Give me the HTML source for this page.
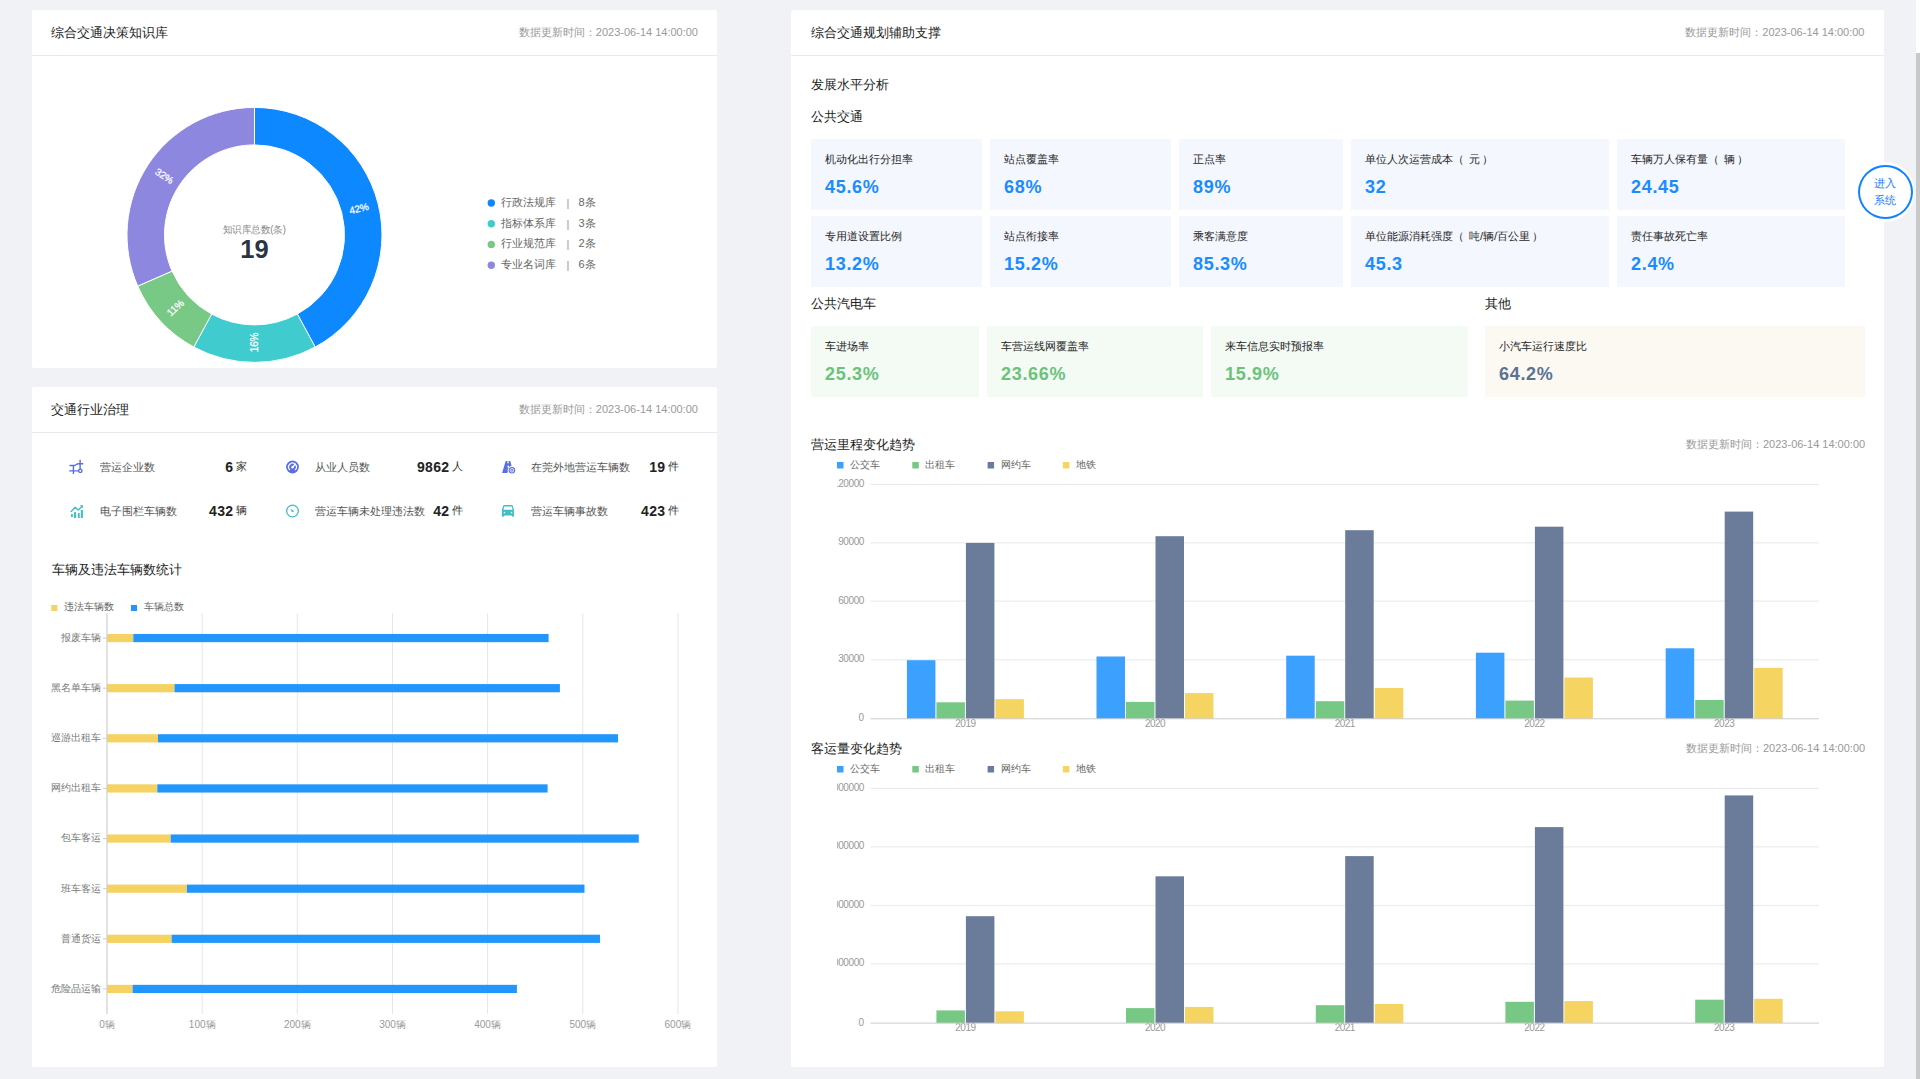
<!DOCTYPE html><html><head><meta charset="utf-8"><style>
*{margin:0;padding:0;box-sizing:border-box}
html,body{width:1920px;height:1079px;overflow:hidden;background:#f0f2f5;font-family:"Liberation Sans",sans-serif;color:#333}
.abs{position:absolute}
.panel{position:absolute;background:#fff;border-radius:2px}
.hd{position:absolute;left:0;right:0;top:0;height:46px;border-bottom:1px solid #e8eaee}
.t13{position:absolute;font-size:13px;line-height:13px;white-space:nowrap;color:#222}
.ts{position:absolute;font-size:11px;line-height:11px;white-space:nowrap;color:#999}
.card{position:absolute;height:71px}
.card .lb{position:absolute;left:14px;top:14.5px;font-size:11px;line-height:11px;color:#262626;white-space:nowrap}
.card .vl{position:absolute;left:14px;top:38.8px;font-size:18px;line-height:18px;font-weight:bold;white-space:nowrap;letter-spacing:0.7px}
.pl{margin-right:5px}.pr{margin-left:1.5px}
.cb{background:#f4f7fd}.cb .vl{color:#1a8cff}
.cg{background:#f4fbf4}.cg .vl{color:#6cc27b}
.cy{background:#fbf9f2}.cy .vl{color:#5b7295}
svg text{font-family:"Liberation Sans",sans-serif}
</style></head><body>

<div class="panel" style="left:32px;top:10px;width:685px;height:358px">
<div class="hd"></div>
<div class="t13" style="left:19px;top:16px">综合交通决策知识库</div>
<div class="ts" style="right:19px;top:17px">数据更新时间：2023-06-14 14:00:00</div>
</div>
<svg class="abs" style="left:0;top:0" width="720" height="380">
<path d="M254.50,107.40 A127.5,127.5 0 0 1 315.18,347.03 L297.34,314.05 A90,90 0 0 0 254.50,144.90 Z" fill="#0d88ff" stroke="#fff" stroke-width="1"/>
<path d="M315.18,347.03 A127.5,127.5 0 0 1 193.82,347.03 L211.66,314.05 A90,90 0 0 0 297.34,314.05 Z" fill="#40cccf" stroke="#fff" stroke-width="1"/>
<path d="M193.82,347.03 A127.5,127.5 0 0 1 137.74,286.12 L172.08,271.05 A90,90 0 0 0 211.66,314.05 Z" fill="#78c985" stroke="#fff" stroke-width="1"/>
<path d="M137.74,286.12 A127.5,127.5 0 0 1 254.50,107.40 L254.50,144.90 A90,90 0 0 0 172.08,271.05 Z" fill="#8e87e0" stroke="#fff" stroke-width="1"/>
<text x="358.8" y="208.5" transform="rotate(-14.2 358.8 208.5)" fill="#fff" stroke="#fff" stroke-width="0.25" font-size="10" letter-spacing="-0.2" text-anchor="middle" dominant-baseline="central">42%</text>
<text x="254.5" y="342.5" transform="rotate(-90.0 254.5 342.5)" fill="#fff" stroke="#fff" stroke-width="0.25" font-size="10" letter-spacing="-0.2" text-anchor="middle" dominant-baseline="central">16%</text>
<text x="175.3" y="307.8" transform="rotate(-42.6 175.3 307.8)" fill="#fff" stroke="#fff" stroke-width="0.25" font-size="10" letter-spacing="-0.2" text-anchor="middle" dominant-baseline="central">11%</text>
<text x="164.4" y="176.0" transform="rotate(33.2 164.4 176.0)" fill="#fff" stroke="#fff" stroke-width="0.25" font-size="10" letter-spacing="-0.2" text-anchor="middle" dominant-baseline="central">32%</text>
<text x="254.5" y="229" fill="#888" font-size="10" textLength="63" lengthAdjust="spacingAndGlyphs" text-anchor="middle" dominant-baseline="central">知识库总数(条)</text>
<text x="254.5" y="249.2" fill="#2a3444" font-size="25.5" font-weight="bold" text-anchor="middle" dominant-baseline="central">19</text>
<circle cx="491.3" cy="203" r="3.7" fill="#0d88ff"/>
<text x="501" y="201.8" fill="#666" font-size="11" dominant-baseline="central">行政法规库</text>
<text x="568" y="203" fill="#999" font-size="11" text-anchor="middle" dominant-baseline="central">|</text>
<text x="578.5" y="201.8" fill="#666" font-size="11" dominant-baseline="central">8条</text>
<circle cx="491.3" cy="223.7" r="3.7" fill="#40cccf"/>
<text x="501" y="222.5" fill="#666" font-size="11" dominant-baseline="central">指标体系库</text>
<text x="568" y="223.7" fill="#999" font-size="11" text-anchor="middle" dominant-baseline="central">|</text>
<text x="578.5" y="222.5" fill="#666" font-size="11" dominant-baseline="central">3条</text>
<circle cx="491.3" cy="244.4" r="3.7" fill="#78c985"/>
<text x="501" y="243.20000000000002" fill="#666" font-size="11" dominant-baseline="central">行业规范库</text>
<text x="568" y="244.4" fill="#999" font-size="11" text-anchor="middle" dominant-baseline="central">|</text>
<text x="578.5" y="243.20000000000002" fill="#666" font-size="11" dominant-baseline="central">2条</text>
<circle cx="491.3" cy="265.3" r="3.7" fill="#8e87e0"/>
<text x="501" y="264.1" fill="#666" font-size="11" dominant-baseline="central">专业名词库</text>
<text x="568" y="265.3" fill="#999" font-size="11" text-anchor="middle" dominant-baseline="central">|</text>
<text x="578.5" y="264.1" fill="#666" font-size="11" dominant-baseline="central">6条</text>
</svg>
<div class="panel" style="left:32px;top:387px;width:685px;height:680px">
<div class="hd"></div>
<div class="t13" style="left:19px;top:16px">交通行业治理</div>
<div class="ts" style="right:19px;top:17px">数据更新时间：2023-06-14 14:00:00</div>
</div>
<svg class="abs" style="left:66px;top:457px" width="20" height="20" viewBox="0 0 20 20"><g stroke="#5a6fe2" stroke-width="1.4" fill="none" stroke-linecap="round"><path d="M4 8.5H8.4C9.6 8.5 10.6 6.7 12.6 6.7H16.7M7.4 8.5V16.4M14.1 3.1V12M3.7 13.9H12.4"/><circle cx="14.3" cy="13.8" r="1.7"/></g></svg>
<svg class="abs" style="left:282px;top:457px" width="20" height="20" viewBox="0 0 20 20"><circle cx="10.5" cy="10" r="6.4" fill="#5a6fe2"/><path d="M7.6 12.7A3.9 3.9 0 1 1 13.4 12.7" stroke="#fff" stroke-width="1.2" fill="none" stroke-linecap="round"/><path d="M10.5 10.3L13.3 7.2" stroke="#fff" stroke-width="1.3" stroke-linecap="round"/><circle cx="10.5" cy="10.3" r="1.2" fill="#fff"/></svg>
<svg class="abs" style="left:498px;top:457px" width="20" height="20" viewBox="0 0 20 20"><path d="M7.7 4H12.3L13.8 10L9 16H4.1Z" fill="#5a6fe2"/><rect x="9.4" y="3.5" width="1.3" height="2.8" fill="#fff"/><rect x="9.5" y="8.5" width="1.5" height="2" rx="0.6" fill="#fff"/><circle cx="13.9" cy="13.3" r="4.3" fill="#fff"/><circle cx="13.9" cy="13.3" r="3.3" fill="#5a6fe2"/><circle cx="13.9" cy="13.3" r="1.8" stroke="#fff" stroke-width="0.8" fill="none"/><circle cx="13.9" cy="13.3" r="0.6" fill="#fff"/></svg>
<svg class="abs" style="left:66px;top:501px" width="20" height="20" viewBox="0 0 20 20"><g fill="#3ebfc9"><rect x="5" y="13" width="1.9" height="3" rx="0.5"/><rect x="8" y="11" width="2" height="6" rx="0.5"/><rect x="11.9" y="12" width="1.8" height="5" rx="0.5"/><rect x="14.8" y="9" width="2.1" height="8" rx="0.5"/><path d="M13.8 4.2H17V7.2Z"/></g><path d="M5.2 10.4L9.1 6.3L12.2 9.1L15.8 5.6" stroke="#3ebfc9" stroke-width="1.4" fill="none" stroke-linecap="round" stroke-linejoin="round"/></svg>
<svg class="abs" style="left:282px;top:501px" width="20" height="20" viewBox="0 0 20 20"><circle cx="10.5" cy="10" r="5.85" stroke="#3ebfc9" stroke-width="1.3" fill="none"/><path d="M8.2 7.8L11.5 9.5L10.4 11.1Z" fill="#3ebfc9"/><circle cx="10.6" cy="10.3" r="1.05" fill="#3ebfc9"/></svg>
<svg class="abs" style="left:498px;top:501px" width="20" height="20" viewBox="0 0 20 20"><path d="M5.3 4.6Q5.5 4 6.2 4H13.8Q14.5 4 14.7 4.6L15.5 7.6L15.9 8.2V15.7H14.6L13.6 14.4H6.4L5.4 15.7H4V8.2L4.4 7.6Z" fill="#3ebfc9"/><path d="M6.2 5.5H13.8L14.5 8.8H5.5Z" fill="#fff"/><circle cx="6.5" cy="11.6" r="0.8" fill="#fff"/><circle cx="13.5" cy="11.6" r="0.8" fill="#fff"/></svg>
<div class="abs" style="left:99.6px;top:461px;font-size:11px;line-height:12px;color:#555;white-space:nowrap">营运企业数</div>
<div class="abs" style="left:47px;width:200px;top:458px;text-align:right;white-space:nowrap;line-height:16px"><span style="font-size:14px;font-weight:bold;color:#222;letter-spacing:0.3px">6</span><span style="font-size:11px;color:#333;margin-left:2.7px;vertical-align:1.5px">家</span></div>
<div class="abs" style="left:315px;top:461px;font-size:11px;line-height:12px;color:#555;white-space:nowrap">从业人员数</div>
<div class="abs" style="left:263px;width:200px;top:458px;text-align:right;white-space:nowrap;line-height:16px"><span style="font-size:14px;font-weight:bold;color:#222;letter-spacing:0.3px">9862</span><span style="font-size:11px;color:#333;margin-left:2.7px;vertical-align:1.5px">人</span></div>
<div class="abs" style="left:530.6px;top:461px;font-size:11px;line-height:12px;color:#555;white-space:nowrap">在莞外地营运车辆数</div>
<div class="abs" style="left:479px;width:200px;top:458px;text-align:right;white-space:nowrap;line-height:16px"><span style="font-size:14px;font-weight:bold;color:#222;letter-spacing:0.3px">19</span><span style="font-size:11px;color:#333;margin-left:2.7px;vertical-align:1.5px">件</span></div>
<div class="abs" style="left:99.6px;top:505px;font-size:11px;line-height:12px;color:#555;white-space:nowrap">电子围栏车辆数</div>
<div class="abs" style="left:47px;width:200px;top:502px;text-align:right;white-space:nowrap;line-height:16px"><span style="font-size:14px;font-weight:bold;color:#222;letter-spacing:0.3px">432</span><span style="font-size:11px;color:#333;margin-left:2.7px;vertical-align:1.5px">辆</span></div>
<div class="abs" style="left:315px;top:505px;font-size:11px;line-height:12px;color:#555;white-space:nowrap">营运车辆未处理违法数</div>
<div class="abs" style="left:263px;width:200px;top:502px;text-align:right;white-space:nowrap;line-height:16px"><span style="font-size:14px;font-weight:bold;color:#222;letter-spacing:0.3px">42</span><span style="font-size:11px;color:#333;margin-left:2.7px;vertical-align:1.5px">件</span></div>
<div class="abs" style="left:530.6px;top:505px;font-size:11px;line-height:12px;color:#555;white-space:nowrap">营运车辆事故数</div>
<div class="abs" style="left:479px;width:200px;top:502px;text-align:right;white-space:nowrap;line-height:16px"><span style="font-size:14px;font-weight:bold;color:#222;letter-spacing:0.3px">423</span><span style="font-size:11px;color:#333;margin-left:2.7px;vertical-align:1.5px">件</span></div>
<div class="t13" style="left:51.5px;top:563px">车辆及违法车辆数统计</div>
<svg class="abs" style="left:0;top:0" width="720" height="1079">
<rect x="51.3" y="605" width="6" height="6" fill="#f5d261"/>
<text x="64" y="606.8" font-size="10" fill="#666" dominant-baseline="central">违法车辆数</text>
<rect x="131" y="605" width="6" height="6" fill="#2196fc"/>
<text x="144" y="606.8" font-size="10" fill="#666" dominant-baseline="central">车辆总数</text>
<line x1="202.2" y1="613" x2="202.2" y2="1014" stroke="#e6e6e6" stroke-width="1"/>
<line x1="297.3" y1="613" x2="297.3" y2="1014" stroke="#e6e6e6" stroke-width="1"/>
<line x1="392.5" y1="613" x2="392.5" y2="1014" stroke="#e6e6e6" stroke-width="1"/>
<line x1="487.6" y1="613" x2="487.6" y2="1014" stroke="#e6e6e6" stroke-width="1"/>
<line x1="582.8" y1="613" x2="582.8" y2="1014" stroke="#e6e6e6" stroke-width="1"/>
<line x1="677.9" y1="613" x2="677.9" y2="1014" stroke="#e6e6e6" stroke-width="1"/>
<rect x="107" y="633.96" width="26.3" height="8.2" fill="#f5d261"/>
<rect x="133.3" y="633.96" width="415.3" height="8.2" fill="#2196fc"/>
<line x1="103" y1="638.1" x2="107" y2="638.1" stroke="#ccc" stroke-width="1"/>
<text x="100.6" y="637.4" font-size="10" fill="#777" text-anchor="end" dominant-baseline="central">报废车辆</text>
<rect x="107" y="684.09" width="67.5" height="8.2" fill="#f5d261"/>
<rect x="174.5" y="684.09" width="385.4" height="8.2" fill="#2196fc"/>
<line x1="103" y1="688.2" x2="107" y2="688.2" stroke="#ccc" stroke-width="1"/>
<text x="100.6" y="687.5" font-size="10" fill="#777" text-anchor="end" dominant-baseline="central">黑名单车辆</text>
<rect x="107" y="734.21" width="51.0" height="8.2" fill="#f5d261"/>
<rect x="158.0" y="734.21" width="460.0" height="8.2" fill="#2196fc"/>
<line x1="103" y1="738.3" x2="107" y2="738.3" stroke="#ccc" stroke-width="1"/>
<text x="100.6" y="737.6" font-size="10" fill="#777" text-anchor="end" dominant-baseline="central">巡游出租车</text>
<rect x="107" y="784.34" width="50.3" height="8.2" fill="#f5d261"/>
<rect x="157.3" y="784.34" width="390.3" height="8.2" fill="#2196fc"/>
<line x1="103" y1="788.4" x2="107" y2="788.4" stroke="#ccc" stroke-width="1"/>
<text x="100.6" y="787.7" font-size="10" fill="#777" text-anchor="end" dominant-baseline="central">网约出租车</text>
<rect x="107" y="834.46" width="63.7" height="8.2" fill="#f5d261"/>
<rect x="170.7" y="834.46" width="468.1" height="8.2" fill="#2196fc"/>
<line x1="103" y1="838.6" x2="107" y2="838.6" stroke="#ccc" stroke-width="1"/>
<text x="100.6" y="837.9" font-size="10" fill="#777" text-anchor="end" dominant-baseline="central">包车客运</text>
<rect x="107" y="884.59" width="79.9" height="8.2" fill="#f5d261"/>
<rect x="186.9" y="884.59" width="397.6" height="8.2" fill="#2196fc"/>
<line x1="103" y1="888.7" x2="107" y2="888.7" stroke="#ccc" stroke-width="1"/>
<text x="100.6" y="888.0" font-size="10" fill="#777" text-anchor="end" dominant-baseline="central">班车客运</text>
<rect x="107" y="934.71" width="64.7" height="8.2" fill="#f5d261"/>
<rect x="171.7" y="934.71" width="428.3" height="8.2" fill="#2196fc"/>
<line x1="103" y1="938.8" x2="107" y2="938.8" stroke="#ccc" stroke-width="1"/>
<text x="100.6" y="938.1" font-size="10" fill="#777" text-anchor="end" dominant-baseline="central">普通货运</text>
<rect x="107" y="984.84" width="25.6" height="8.2" fill="#f5d261"/>
<rect x="132.6" y="984.84" width="384.3" height="8.2" fill="#2196fc"/>
<line x1="103" y1="988.9" x2="107" y2="988.9" stroke="#ccc" stroke-width="1"/>
<text x="100.6" y="988.2" font-size="10" fill="#777" text-anchor="end" dominant-baseline="central">危险品运输</text>
<line x1="107" y1="613" x2="107" y2="1014" stroke="#cfcfcf" stroke-width="1.2"/>
<text x="107.0" y="1024" font-size="10" fill="#999" text-anchor="middle" dominant-baseline="central">0辆</text>
<text x="202.2" y="1024" font-size="10" fill="#999" text-anchor="middle" dominant-baseline="central">100辆</text>
<text x="297.3" y="1024" font-size="10" fill="#999" text-anchor="middle" dominant-baseline="central">200辆</text>
<text x="392.5" y="1024" font-size="10" fill="#999" text-anchor="middle" dominant-baseline="central">300辆</text>
<text x="487.6" y="1024" font-size="10" fill="#999" text-anchor="middle" dominant-baseline="central">400辆</text>
<text x="582.8" y="1024" font-size="10" fill="#999" text-anchor="middle" dominant-baseline="central">500辆</text>
<text x="677.9" y="1024" font-size="10" fill="#999" text-anchor="middle" dominant-baseline="central">600辆</text>
</svg>
<div class="panel" style="left:791px;top:10px;width:1093px;height:1057px">
<div class="hd"></div>
<div class="t13" style="left:19.5px;top:16px">综合交通规划辅助支撑</div>
<div class="ts" style="right:19.5px;top:17px">数据更新时间：2023-06-14 14:00:00</div>
</div>
<div class="t13" style="left:810.5px;top:78px">发展水平分析</div>
<div class="t13" style="left:810.5px;top:110px">公共交通</div>
<div class="card cb" style="left:811px;top:139.2px;width:171px;height:70.5px"><div class="lb">机动化出行分担率</div><div class="vl">45.6%</div></div>
<div class="card cb" style="left:990px;top:139.2px;width:181px;height:70.5px"><div class="lb">站点覆盖率</div><div class="vl">68%</div></div>
<div class="card cb" style="left:1179px;top:139.2px;width:164px;height:70.5px"><div class="lb">正点率</div><div class="vl">89%</div></div>
<div class="card cb" style="left:1351px;top:139.2px;width:258px;height:70.5px"><div class="lb">单位人次运营成本<span class=pl>（</span>元<span class=pr>）</span></div><div class="vl">32</div></div>
<div class="card cb" style="left:1617px;top:139.2px;width:228px;height:70.5px"><div class="lb">车辆万人保有量<span class=pl>（</span>辆<span class=pr>）</span></div><div class="vl">24.45</div></div>
<div class="card cb" style="left:811px;top:216.2px;width:171px;height:70.5px"><div class="lb">专用道设置比例</div><div class="vl">13.2%</div></div>
<div class="card cb" style="left:990px;top:216.2px;width:181px;height:70.5px"><div class="lb">站点衔接率</div><div class="vl">15.2%</div></div>
<div class="card cb" style="left:1179px;top:216.2px;width:164px;height:70.5px"><div class="lb">乘客满意度</div><div class="vl">85.3%</div></div>
<div class="card cb" style="left:1351px;top:216.2px;width:258px;height:70.5px"><div class="lb">单位能源消耗强度<span class=pl>（</span>吨/辆/百公里<span class=pr>）</span></div><div class="vl">45.3</div></div>
<div class="card cb" style="left:1617px;top:216.2px;width:228px;height:70.5px"><div class="lb">责任事故死亡率</div><div class="vl">2.4%</div></div>
<div class="t13" style="left:810.5px;top:297px">公共汽电车</div>
<div class="t13" style="left:1485px;top:297px">其他</div>
<div class="card cg" style="left:811px;top:326px;width:168px"><div class="lb">车进场率</div><div class="vl">25.3%</div></div>
<div class="card cg" style="left:987px;top:326px;width:216px"><div class="lb">车营运线网覆盖率</div><div class="vl">23.66%</div></div>
<div class="card cg" style="left:1211px;top:326px;width:257px"><div class="lb">来车信息实时预报率</div><div class="vl">15.9%</div></div>
<div class="card cy" style="left:1485px;top:326px;width:380px"><div class="lb">小汽车运行速度比</div><div class="vl">64.2%</div></div>
<div class="abs" style="left:1855.4px;top:161.9px;width:60px;height:60px;border-radius:50%;background:#fff"></div>
<div class="abs" style="left:1858.1px;top:165px;width:54.6px;height:54.2px;border-radius:50%;border:2px solid #0f82ff"></div>
<div class="abs" style="left:1855.4px;top:175px;width:60px;text-align:center;font-size:11px;line-height:16.5px;color:#1a7eff">进入<br>系统</div>
<div class="abs" style="left:1916px;top:0;width:4px;height:1079px;background:#fff"></div>
<div class="abs" style="left:1916px;top:53px;width:4px;height:1026px;background:#c9c9c9"></div>
<div class="t13" style="left:810.5px;top:438.3px">营运里程变化趋势</div>
<div class="ts" style="left:1686px;top:439px">数据更新时间：2023-06-14 14:00:00</div>
<svg class="abs" style="left:837px;top:452px;overflow:hidden" width="1000" height="286.79999999999995">
<rect x="0.0" y="10" width="6.5" height="6.5" fill="#3ba0ff"/>
<text x="13.0" y="12" font-size="10" fill="#666" dominant-baseline="central">公交车</text>
<rect x="75.29999999999995" y="10" width="6.5" height="6.5" fill="#77c884"/>
<text x="88.29999999999995" y="12" font-size="10" fill="#666" dominant-baseline="central">出租车</text>
<rect x="150.60000000000002" y="10" width="6.5" height="6.5" fill="#6a7c9a"/>
<text x="163.60000000000002" y="12" font-size="10" fill="#666" dominant-baseline="central">网约车</text>
<rect x="225.9000000000001" y="10" width="6.5" height="6.5" fill="#f5d462"/>
<text x="238.9000000000001" y="12" font-size="10" fill="#666" dominant-baseline="central">地铁</text>
<line x1="33.5" y1="32.39999999999998" x2="982" y2="32.39999999999998" stroke="#e9e9e9" stroke-width="1"/>
<text x="27" y="31.399999999999977" font-size="10" fill="#999" letter-spacing="-0.4" text-anchor="end" dominant-baseline="central">120000</text>
<line x1="33.5" y1="90.89999999999998" x2="982" y2="90.89999999999998" stroke="#e9e9e9" stroke-width="1"/>
<text x="27" y="89.89999999999998" font-size="10" fill="#999" letter-spacing="-0.4" text-anchor="end" dominant-baseline="central">90000</text>
<line x1="33.5" y1="149.10000000000002" x2="982" y2="149.10000000000002" stroke="#e9e9e9" stroke-width="1"/>
<text x="27" y="148.10000000000002" font-size="10" fill="#999" letter-spacing="-0.4" text-anchor="end" dominant-baseline="central">60000</text>
<line x1="33.5" y1="207.79999999999995" x2="982" y2="207.79999999999995" stroke="#e9e9e9" stroke-width="1"/>
<text x="27" y="206.79999999999995" font-size="10" fill="#999" letter-spacing="-0.4" text-anchor="end" dominant-baseline="central">30000</text>
<text x="27" y="265.79999999999995" font-size="10" fill="#999" text-anchor="end" dominant-baseline="central">0</text>
<rect x="69.9" y="208.2" width="28.5" height="58.6" fill="#3ba0ff"/>
<rect x="99.4" y="250.3" width="28.5" height="16.5" fill="#77c884"/>
<rect x="128.9" y="90.9" width="28.5" height="175.9" fill="#6a7c9a"/>
<rect x="158.4" y="247.2" width="28.5" height="19.6" fill="#f5d462"/>
<text x="128.4" y="271.5999999999999" font-size="10" fill="#999" letter-spacing="-0.5" text-anchor="middle" dominant-baseline="central">2019</text>
<rect x="259.5" y="204.5" width="28.5" height="62.3" fill="#3ba0ff"/>
<rect x="289.0" y="249.9" width="28.5" height="16.9" fill="#77c884"/>
<rect x="318.5" y="84.2" width="28.5" height="182.5" fill="#6a7c9a"/>
<rect x="348.0" y="241.1" width="28.5" height="25.7" fill="#f5d462"/>
<text x="318.0" y="271.5999999999999" font-size="10" fill="#999" letter-spacing="-0.5" text-anchor="middle" dominant-baseline="central">2020</text>
<rect x="449.2" y="203.7" width="28.5" height="63.1" fill="#3ba0ff"/>
<rect x="478.8" y="249.2" width="28.5" height="17.6" fill="#77c884"/>
<rect x="508.2" y="78.2" width="28.5" height="188.6" fill="#6a7c9a"/>
<rect x="537.8" y="236.0" width="28.5" height="30.8" fill="#f5d462"/>
<text x="507.8" y="271.5999999999999" font-size="10" fill="#999" letter-spacing="-0.5" text-anchor="middle" dominant-baseline="central">2021</text>
<rect x="638.9" y="200.7" width="28.5" height="66.1" fill="#3ba0ff"/>
<rect x="668.4" y="248.6" width="28.5" height="18.2" fill="#77c884"/>
<rect x="697.9" y="74.7" width="28.5" height="192.1" fill="#6a7c9a"/>
<rect x="727.4" y="225.5" width="28.5" height="41.3" fill="#f5d462"/>
<text x="697.4" y="271.5999999999999" font-size="10" fill="#999" letter-spacing="-0.5" text-anchor="middle" dominant-baseline="central">2022</text>
<rect x="828.7" y="196.3" width="28.5" height="70.5" fill="#3ba0ff"/>
<rect x="858.2" y="248.0" width="28.5" height="18.8" fill="#77c884"/>
<rect x="887.7" y="59.6" width="28.5" height="207.2" fill="#6a7c9a"/>
<rect x="917.2" y="215.9" width="28.5" height="50.9" fill="#f5d462"/>
<text x="887.2" y="271.5999999999999" font-size="10" fill="#999" letter-spacing="-0.5" text-anchor="middle" dominant-baseline="central">2023</text>
<line x1="33.5" y1="266.79999999999995" x2="982" y2="266.79999999999995" stroke="#ccc" stroke-width="1"/>
</svg>
<div class="t13" style="left:810.5px;top:742.3px">客运量变化趋势</div>
<div class="ts" style="left:1686px;top:743px">数据更新时间：2023-06-14 14:00:00</div>
<svg class="abs" style="left:837px;top:756px;overflow:hidden" width="1000" height="287.0999999999999">
<rect x="0.0" y="10" width="6.5" height="6.5" fill="#3ba0ff"/>
<text x="13.0" y="12" font-size="10" fill="#666" dominant-baseline="central">公交车</text>
<rect x="75.29999999999995" y="10" width="6.5" height="6.5" fill="#77c884"/>
<text x="88.29999999999995" y="12" font-size="10" fill="#666" dominant-baseline="central">出租车</text>
<rect x="150.60000000000002" y="10" width="6.5" height="6.5" fill="#6a7c9a"/>
<text x="163.60000000000002" y="12" font-size="10" fill="#666" dominant-baseline="central">网约车</text>
<rect x="225.9000000000001" y="10" width="6.5" height="6.5" fill="#f5d462"/>
<text x="238.9000000000001" y="12" font-size="10" fill="#666" dominant-baseline="central">地铁</text>
<line x1="33.5" y1="32.299999999999955" x2="982" y2="32.299999999999955" stroke="#e9e9e9" stroke-width="1"/>
<text x="27" y="31.299999999999955" font-size="10" fill="#999" letter-spacing="-0.4" text-anchor="end" dominant-baseline="central">4000000</text>
<line x1="33.5" y1="90.89999999999998" x2="982" y2="90.89999999999998" stroke="#e9e9e9" stroke-width="1"/>
<text x="27" y="89.89999999999998" font-size="10" fill="#999" letter-spacing="-0.4" text-anchor="end" dominant-baseline="central">3000000</text>
<line x1="33.5" y1="149.39999999999998" x2="982" y2="149.39999999999998" stroke="#e9e9e9" stroke-width="1"/>
<text x="27" y="148.39999999999998" font-size="10" fill="#999" letter-spacing="-0.4" text-anchor="end" dominant-baseline="central">2000000</text>
<line x1="33.5" y1="207.89999999999998" x2="982" y2="207.89999999999998" stroke="#e9e9e9" stroke-width="1"/>
<text x="27" y="206.89999999999998" font-size="10" fill="#999" letter-spacing="-0.4" text-anchor="end" dominant-baseline="central">1000000</text>
<text x="27" y="266.1" font-size="10" fill="#999" text-anchor="end" dominant-baseline="central">0</text>
<rect x="99.4" y="254.4" width="28.5" height="12.7" fill="#77c884"/>
<rect x="128.9" y="160.2" width="28.5" height="106.9" fill="#6a7c9a"/>
<rect x="158.4" y="255.3" width="28.5" height="11.8" fill="#f5d462"/>
<text x="128.4" y="271.9000000000001" font-size="10" fill="#999" letter-spacing="-0.5" text-anchor="middle" dominant-baseline="central">2019</text>
<rect x="289.0" y="252.1" width="28.5" height="15.0" fill="#77c884"/>
<rect x="318.5" y="120.3" width="28.5" height="146.8" fill="#6a7c9a"/>
<rect x="348.0" y="250.9" width="28.5" height="16.2" fill="#f5d462"/>
<text x="318.0" y="271.9000000000001" font-size="10" fill="#999" letter-spacing="-0.5" text-anchor="middle" dominant-baseline="central">2020</text>
<rect x="478.8" y="249.2" width="28.5" height="17.9" fill="#77c884"/>
<rect x="508.2" y="100.1" width="28.5" height="167.0" fill="#6a7c9a"/>
<rect x="537.8" y="248.0" width="28.5" height="19.1" fill="#f5d462"/>
<text x="507.8" y="271.9000000000001" font-size="10" fill="#999" letter-spacing="-0.5" text-anchor="middle" dominant-baseline="central">2021</text>
<rect x="668.4" y="245.8" width="28.5" height="21.3" fill="#77c884"/>
<rect x="697.9" y="71.1" width="28.5" height="196.0" fill="#6a7c9a"/>
<rect x="727.4" y="245.0" width="28.5" height="22.1" fill="#f5d462"/>
<text x="697.4" y="271.9000000000001" font-size="10" fill="#999" letter-spacing="-0.5" text-anchor="middle" dominant-baseline="central">2022</text>
<rect x="858.2" y="243.7" width="28.5" height="23.4" fill="#77c884"/>
<rect x="887.7" y="39.4" width="28.5" height="227.7" fill="#6a7c9a"/>
<rect x="917.2" y="242.8" width="28.5" height="24.3" fill="#f5d462"/>
<text x="887.2" y="271.9000000000001" font-size="10" fill="#999" letter-spacing="-0.5" text-anchor="middle" dominant-baseline="central">2023</text>
<line x1="33.5" y1="267.1" x2="982" y2="267.1" stroke="#ccc" stroke-width="1"/>
</svg>
</body></html>
